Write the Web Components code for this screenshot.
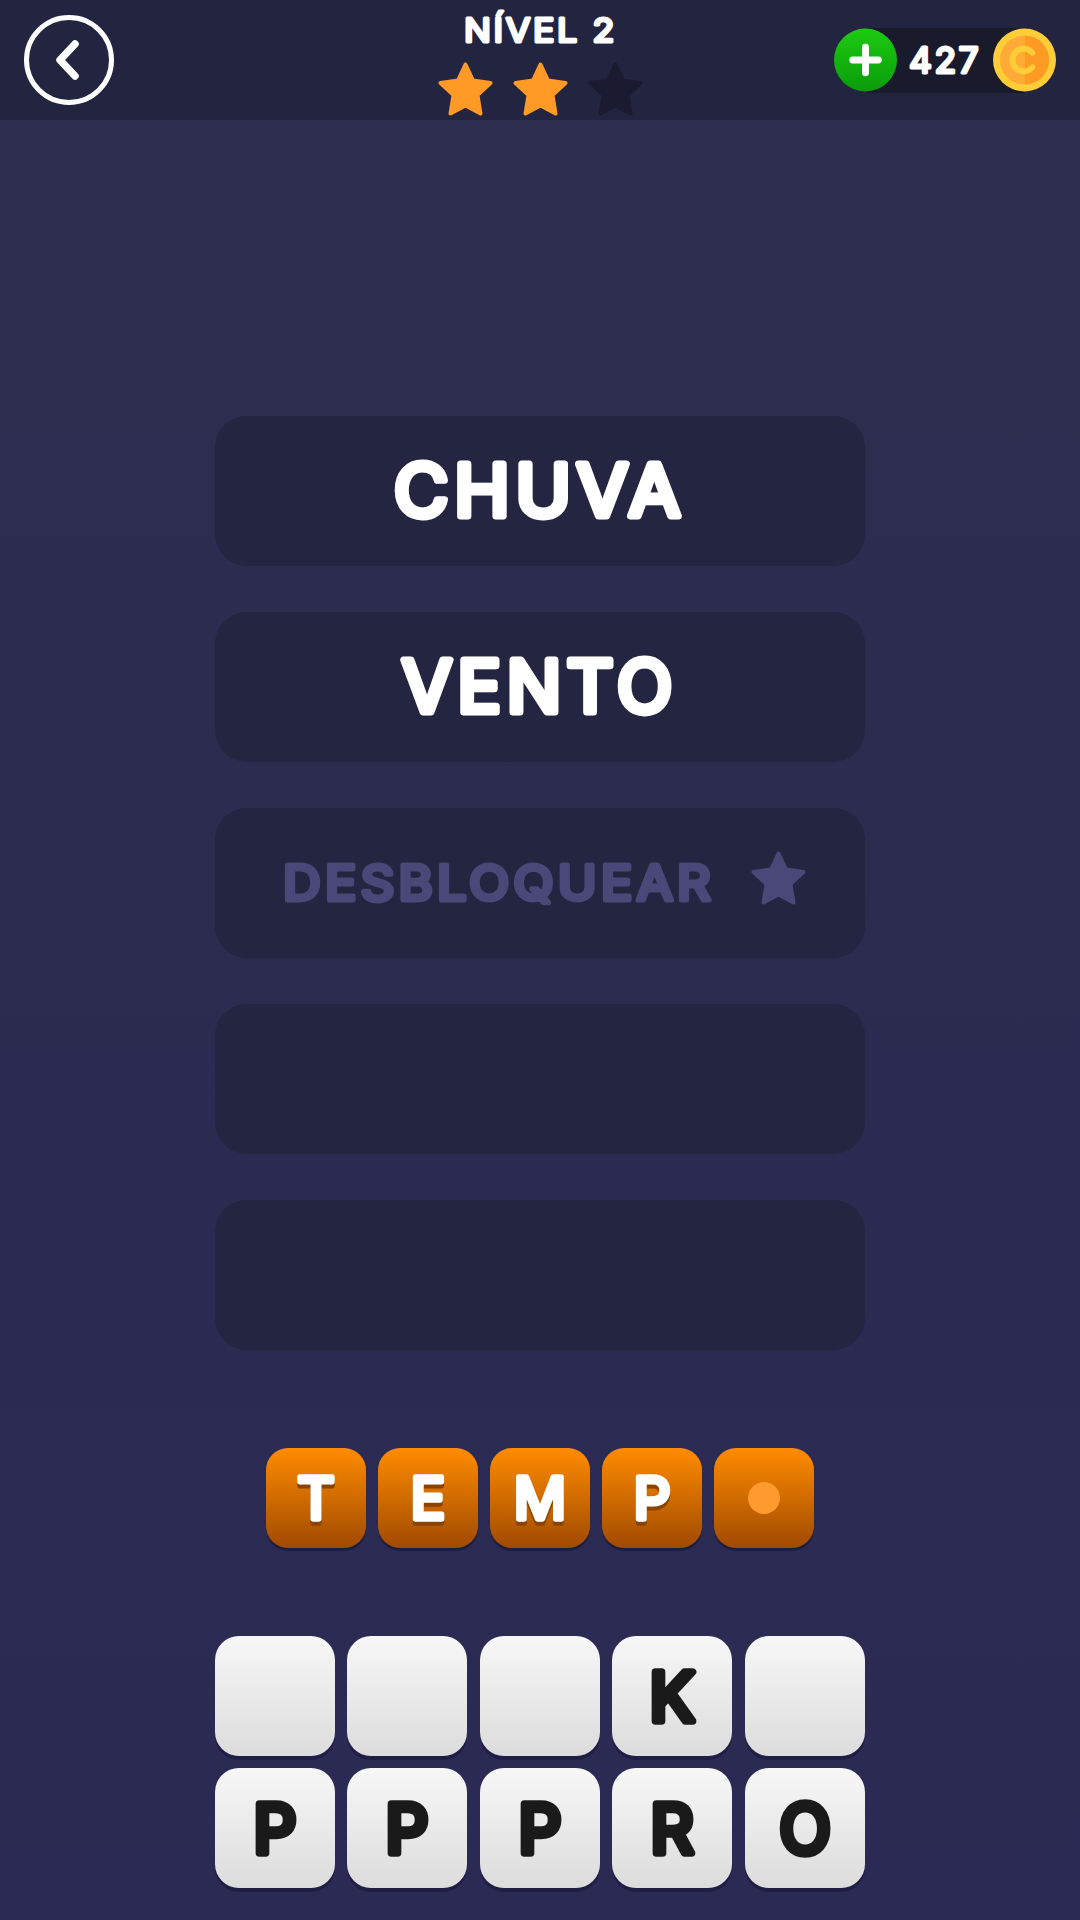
<!DOCTYPE html>
<html lang="pt">
<head>
<meta charset="utf-8">
<title>Nível 2</title>
<style>
    html, body { margin: 0; padding: 0; }
    body {
        width: 1080px;
        height: 1920px;
        overflow: hidden;
        background: linear-gradient(#2d2d4e, #2a2a54);
        font-family: "Inter", "Liberation Sans", sans-serif;
    }
</style>
</head>
<body>
<word-game></word-game>

<script>
// text with rounded corners, the installed fonts have none of their own
class RoundText extends HTMLElement {
    connectedCallback() {
        const text = this.getAttribute('text');
        const size = +this.getAttribute('size');
        const width = +this.getAttribute('width');
        const stroke = +this.getAttribute('stroke');
        const color = this.getAttribute('color');
        const cap = size * 0.727;
        const boxW = width + 24;
        const boxH = Math.round(cap + 40);
        const length = text.length > 1
            ? `textLength="${width}" lengthAdjust="spacingAndGlyphs" letter-spacing="${stroke * 0.8}"`
            : '';
        const root = this.attachShadow({ mode: 'open' });
        root.innerHTML = `
            <style>
                :host { display: block; line-height: 0; }
                svg { display: block; overflow: visible; }
                text {
                    font-family: "Inter", "Liberation Sans", sans-serif;
                    font-weight: 400;
                    stroke-linejoin: round;
                    stroke-linecap: round;
                }
            </style>
            <svg width="${boxW}" height="${boxH}" viewBox="0 0 ${boxW} ${boxH}">
                <text x="${boxW / 2}" y="${boxH / 2 + cap / 2}" text-anchor="middle"
                    font-size="${size}" fill="${color}" stroke="${color}" stroke-width="${stroke}"
                    ${length}>${text}</text>
            </svg>
        `;
    }
}
customElements.define('round-text', RoundText);

class StarIcon extends HTMLElement {
    connectedCallback() {
        const color = this.getAttribute('color');
        const root = this.attachShadow({ mode: 'open' });
        root.innerHTML = `
            <style>
                :host { display: block; width: 55px; height: 54px; }
                svg { display: block; width: 100%; height: 100%; }
            </style>
            <svg viewBox="0 0 55 54">
                <polygon points="27.5,2.500 35,18.500 52.500,21 39.500,33 42.500,51.500 27.500,43.500 12.500,51.500 15.500,33 2.500,21 20,18.500"
                    fill="${color}" stroke="${color}" stroke-width="4" stroke-linejoin="round"/>
            </svg>
        `;
    }
}
customElements.define('star-icon', StarIcon);

class CoinCounter extends HTMLElement {
    constructor() {
        super();
        this.attachShadow({ mode: 'open' }).innerHTML = `
            <style>
                :host {
                    display: flex;
                    align-items: center;
                    justify-content: space-between;
                    width: 222px;
                    height: 65px;
                    background: linear-gradient(to right, transparent 32px, #191a2c 32px, #191a2c 190px, transparent 190px);
                }
                svg { display: block; }
            </style>
            <svg width="64" height="64" viewBox="0 0 64 64">
                <defs>
                    <linearGradient id="green" x1="0" y1="0" x2="0" y2="1">
                        <stop offset="0" stop-color="#1dcb12"/>
                        <stop offset="1" stop-color="#0a9c0a"/>
                    </linearGradient>
                </defs>
                <circle cx="32" cy="32" r="32" fill="url(#green)"/>
                <path d="M32 19V45M19 32H45" stroke="#fff" stroke-width="7" stroke-linecap="round" fill="none"/>
            </svg>
            <slot></slot>
            <svg width="64" height="64" viewBox="0 0 64 64">
                <circle cx="32" cy="32" r="32" fill="#ffcd38"/>
                <path d="M32 7A25 25 0 0 0 32 57Z" fill="#ffab38"/>
                <path d="M32 7A25 25 0 0 1 32 57Z" fill="#ff9a24"/>
                <path d="M40 24.500A11.500 11.500 0 1 0 40 39.500" stroke="#ffcd38" stroke-width="6" stroke-linecap="round" fill="none"/>
            </svg>
        `;
    }
}
customElements.define('coin-counter', CoinCounter);

class GameHeader extends HTMLElement {
    constructor() {
        super();
        this.attachShadow({ mode: 'open' }).innerHTML = `
            <style>
                :host {
                    display: grid;
                    grid-template-columns: 1fr auto 1fr;
                    align-items: center;
                    height: 120px;
                    padding: 0 24px;
                    box-sizing: border-box;
                    background: #232440;
                }
                .back { display: block; }
                .middle {
                    display: flex;
                    flex-direction: column;
                    align-items: center;
                    height: 120px;
                }
                .title { height: 60px; display: flex; align-items: center; }
                .stars { display: flex; gap: 20px; margin-top: 2px; }
                .right { justify-self: end; }
            </style>
            <svg class="back" width="90" height="90" viewBox="0 0 90 90">
                <circle cx="45" cy="45" r="42.500" fill="none" stroke="#fff" stroke-width="5"/>
                <path d="M51 29L36 45L51 61" fill="none" stroke="#fff" stroke-width="7.500" stroke-linecap="round" stroke-linejoin="round"/>
            </svg>
            <div class="middle">
                <div class="title"><round-text text="NÍVEL 2" size="33" width="153" stroke="3" color="#fff"></round-text></div>
                <div class="stars">
                    <star-icon color="#ff9a26"></star-icon>
                    <star-icon color="#ff9a26"></star-icon>
                    <star-icon color="#1a1b30"></star-icon>
                </div>
            </div>
            <coin-counter class="right"><round-text text="427" size="36" width="72" stroke="3" color="#fff"></round-text></coin-counter>
        `;
    }
}
customElements.define('game-header', GameHeader);

class WordSlot extends HTMLElement {
    constructor() {
        super();
        this.attachShadow({ mode: 'open' }).innerHTML = `
            <style>
                :host {
                    display: flex;
                    align-items: center;
                    justify-content: center;
                    gap: 24px;
                    height: 150px;
                    border-radius: 32px;
                    background: #242540;
                }
                ::slotted(round-text) { margin-bottom: 2px; }
                ::slotted(star-icon) { margin: 0 4px 11px 0; }
            </style>
            <slot></slot>
        `;
    }
}
customElements.define('word-slot', WordSlot);

class LetterTile extends HTMLElement {
    constructor() {
        super();
        this.attachShadow({ mode: 'open' }).innerHTML = `
            <style>
                :host {
                    display: flex;
                    align-items: center;
                    justify-content: center;
                    width: 100px;
                    height: 100px;
                    border-radius: 22px;
                    background: linear-gradient(#ff8c00, #a04a00);
                    box-shadow: 0 3px 0 rgba(20, 16, 50, .55);
                }
                .dot { width: 32px; height: 32px; border-radius: 50%; background: #ff9a2e; }
                ::slotted(round-text) { filter: drop-shadow(0 4px 0 #8a4300); }
            </style>
            <slot><div class="dot"></div></slot>
        `;
    }
}
customElements.define('letter-tile', LetterTile);

class LetterKey extends HTMLElement {
    constructor() {
        super();
        this.attachShadow({ mode: 'open' }).innerHTML = `
            <style>
                :host {
                    display: flex;
                    align-items: center;
                    justify-content: center;
                    height: 120px;
                    border-radius: 24px;
                    background: linear-gradient(#f7f7f7, #dcdcdc);
                    box-shadow: 0 4px 0 rgba(20, 16, 50, .45);
                }
            </style>
            <slot></slot>
        `;
    }
}
customElements.define('letter-key', LetterKey);

class WordGame extends HTMLElement {
    constructor() {
        super();
        const word = (t, w) => `<word-slot><round-text text="${t}" size="71" width="${w}" stroke="7" color="#fff"></round-text></word-slot>`;
        const tile = (t) => `<letter-tile><round-text text="${t}" size="58" width="50" stroke="5.500" color="#fff"></round-text></letter-tile>`;
        const key = (t) => t
            ? `<letter-key><round-text text="${t}" size="67" width="56" stroke="7.500" color="#1a1a1a"></round-text></letter-key>`
            : `<letter-key></letter-key>`;
        this.attachShadow({ mode: 'open' }).innerHTML = `
            <style>
                :host { display: block; }
                .slots {
                    display: flex;
                    flex-direction: column;
                    gap: 46px;
                    width: 650px;
                    margin: 296px auto 0;
                }
                .tiles {
                    display: flex;
                    justify-content: center;
                    gap: 12px;
                    margin-top: 98px;
                }
                .keys {
                    display: grid;
                    grid-template-columns: repeat(5, 120px);
                    gap: 12px 12.400px;
                    width: 650px;
                    margin: 88px auto 0;
                }
            </style>
            <game-header></game-header>
            <div class="slots">
                ${word('CHUVA', 292)}
                ${word('VENTO', 276)}
                <word-slot>
                    <round-text text="DESBLOQUEAR" size="48" width="432" stroke="5" color="#4a4878"></round-text>
                    <star-icon color="#4a4878"></star-icon>
                </word-slot>
                <word-slot></word-slot>
                <word-slot></word-slot>
            </div>
            <div class="tiles">
                ${tile('T')}${tile('E')}${tile('M')}${tile('P')}
                <letter-tile></letter-tile>
            </div>
            <div class="keys">
                ${key()}${key()}${key()}${key('K')}${key()}
                ${key('P')}${key('P')}${key('P')}${key('R')}${key('O')}
            </div>
        `;
    }
}
customElements.define('word-game', WordGame);
</script>
</body>
</html>
